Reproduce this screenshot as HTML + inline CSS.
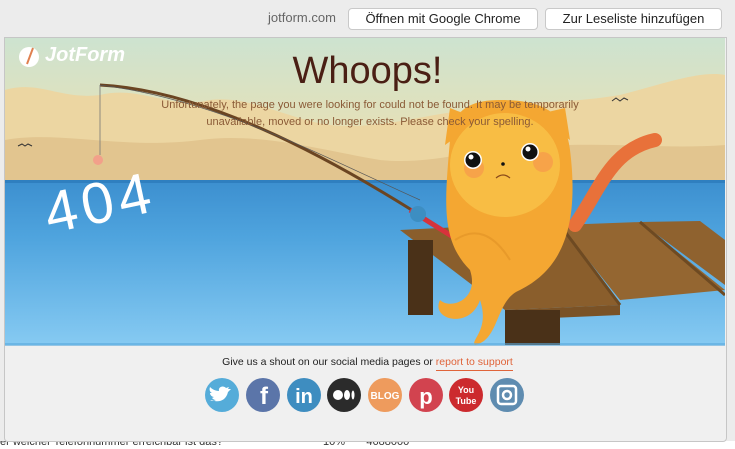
<!DOCTYPE html>
<html><head><meta charset="utf-8"><style>
body{margin:0;width:735px;height:449px;overflow:hidden;background:#ececec;font-family:"Liberation Sans",sans-serif;position:relative}
.btn{position:absolute;top:8px;height:20px;border:1px solid #c9c9c9;border-radius:4px;background:#fff;font-size:13px;line-height:20px;text-align:center;color:#222}
svg{position:absolute;left:0;top:0}
.t{position:absolute;text-align:center}
</style></head><body>
<div style="position:absolute;left:268px;top:10px;font-size:13px;color:#666">jotform.com</div>
<div class="btn" style="left:348px;width:188px">Öffnen mit Google Chrome</div>
<div class="btn" style="left:545px;width:175px">Zur Leseliste hinzufügen</div>
<div style="position:absolute;left:0;top:441px;width:735px;height:8px;background:#fff;font-size:11px;line-height:14px;color:#333;overflow:hidden"><span style="position:relative;top:-6px">er welcher Telefonnummer erreichbar ist das?</span><span style="position:relative;top:-6px;left:100px">10%&nbsp;&nbsp;&nbsp;&nbsp;&nbsp;&nbsp;&nbsp;4688000</span></div>
<div style="position:absolute;left:4px;top:37px;width:721px;height:403px;border:1px solid #c6c6c6;background:#f0f0f0;border-radius:0 0 4px 4px"></div>
<svg width="735" height="449" viewBox="0 0 735 449">
<defs>
<linearGradient id="sky" x1="0" y1="0" x2="0" y2="1"><stop offset="0" stop-color="#cde3d0"/><stop offset="1" stop-color="#f4dfa8"/></linearGradient>
<linearGradient id="sea" x1="0" y1="0" x2="0" y2="1"><stop offset="0" stop-color="#3c8fcf"/><stop offset="0.35" stop-color="#4fa4de"/><stop offset="1" stop-color="#86caf2"/></linearGradient>
<clipPath id="c"><rect x="5" y="38" width="720" height="307"/></clipPath>
</defs>
<g clip-path="url(#c)">
<rect x="5" y="38" width="720" height="150" fill="url(#sky)"/>
<path d="M5 90 C40 80 60 100 100 95 C140 85 170 110 210 100 C250 95 290 120 330 125 C380 130 420 115 470 110 C520 100 560 105 620 95 C660 85 700 70 725 75 L725 185 L5 185Z" fill="#ecd6a2"/>
<path d="M5 140 C60 130 120 150 200 140 C260 132 320 150 380 160 C430 165 470 150 520 148 C600 140 660 150 725 145 L725 185 L5 185Z" fill="#e2c58f"/>
<rect x="5" y="180" width="720" height="165" fill="url(#sea)"/>
<rect x="5" y="180" width="720" height="3" fill="#2f7fbf"/>
<path d="M18 146 l4 -2 l3 2 l3 -2 l4 2" stroke="#333" fill="none" stroke-width="1"/>
<path d="M612 101 l4 -3 l4 3 l4 -3 l4 2" stroke="#333" fill="none" stroke-width="1"/>
<polygon points="400,230 560,222 620,305 505,310" fill="#8a5e2c"/>
<polygon points="560,225 640,222 725,290 620,300" fill="#946631"/>
<polygon points="640,222 700,221 725,240 725,285" fill="#8f622f"/>
<path d="M560 225 L620 305 M640 222 L725 295" stroke="#6e4a22" stroke-width="3"/>
<polygon points="505,310 620,305 620,315 505,320" fill="#7a5226"/>
<rect x="408" y="240" width="25" height="75" fill="#4a3118"/>
<rect x="505" y="310" width="55" height="35" fill="#4a3118"/>
<path d="M100 85 C200 90 320 150 440 228" stroke="#6b4522" stroke-width="3" fill="none"/>
<path d="M100 85 C220 100 330 160 420 200" stroke="#555" stroke-width="0.7" fill="none"/>
<line x1="100" y1="85" x2="100" y2="155" stroke="#777" stroke-width="0.8"/>
<circle cx="98" cy="160" r="5" fill="#f2a08a"/>
<line x1="410" y1="210" x2="490" y2="260" stroke="#d6323c" stroke-width="5"/>
<circle cx="418" cy="214" r="8" fill="#3d8ec2"/>
<path d="M575 225 C600 190 610 150 655 140" stroke="#e8713a" stroke-width="14" fill="none" stroke-linecap="round"/>
<path d="M450 140 C445 200 440 240 470 270 C480 300 450 310 440 300 C430 320 470 330 480 300 C490 330 470 340 475 345 C500 340 495 300 520 290 C560 270 580 230 570 150 C565 110 540 100 500 100 C470 100 452 110 450 140Z" fill="#f4a732"/>
<polygon points="445,145 450,108 480,120" fill="#f4a732"/>
<polygon points="570,140 565,108 535,115" fill="#f4a732"/>
<ellipse cx="505" cy="165" rx="55" ry="52" fill="#f8bd44"/>
<circle cx="474" cy="168" r="10" fill="#f7a349"/>
<circle cx="543" cy="162" r="10" fill="#f7a349"/>
<circle cx="473" cy="160" r="9" fill="#fff"/><circle cx="473" cy="160" r="7.5" fill="#111"/><circle cx="471" cy="157" r="2.5" fill="#fff"/>
<circle cx="530" cy="152" r="9" fill="#fff"/><circle cx="530" cy="152" r="7.5" fill="#111"/><circle cx="528" cy="149" r="2.5" fill="#fff"/>
<circle cx="503" cy="164" r="1.8" fill="#111"/>
<path d="M496 178 q7 -6 14 0" stroke="#8a4a1a" fill="none" stroke-width="1.2"/>
<path d="M455 240 q30 -20 55 20" stroke="#e89a2a" fill="none" stroke-width="2"/>
<text x="104" y="222" font-family="Liberation Sans,sans-serif" font-size="58" fill="#fff" transform="rotate(-12 104 222)" text-anchor="middle" letter-spacing="5">404</text>
</g>
<rect x="5" y="343" width="720" height="3" fill="#5aa8dc" opacity=".6"/>
<circle cx="29" cy="57" r="10" fill="#fff"/>
<path d="M27 64 L33 48" stroke="#e08050" stroke-width="2"/>
<g font-family="Liberation Sans,sans-serif" font-weight="bold" text-anchor="middle" fill="#fff">
<circle cx="222" cy="395" r="17" fill="#55acd9"/><path d="M212 400 c6 3 14 1 16 -8 l3 -3 l-3 0 l1 -2 l-3 1 c-3 -3 -8 -1 -7 3 c-4 0 -7 -2 -9 -4 c-1 3 0 5 2 6 l-2 0 c0 2 2 4 4 4 l-2 1 c1 1 2 2 4 2 c-2 1 -4 1 -6 0z" fill="#fff"/>
<circle cx="263" cy="395" r="17" fill="#5b75a9"/><text x="264" y="404" font-size="24">f</text>
<circle cx="304" cy="395" r="17" fill="#3e8dc0"/><text x="304" y="403" font-size="20">in</text>
<circle cx="344" cy="395" r="17" fill="#2b2b2b"/><circle cx="338" cy="395" r="5"/><ellipse cx="347" cy="395" rx="3" ry="5"/><ellipse cx="353" cy="395" rx="1.5" ry="4.5"/>
<circle cx="385" cy="395" r="17" fill="#ee9b5d"/><text x="385" y="399" font-size="10">BLOG</text>
<circle cx="426" cy="395" r="17" fill="#d2434f"/><text x="426" y="404" font-size="22">p</text>
<circle cx="466" cy="395" r="17" fill="#cc2a2e"/><text x="466" y="393" font-size="9">You</text><text x="466" y="404" font-size="9">Tube</text>
<circle cx="507" cy="395" r="17" fill="#5f8cb0"/><rect x="498" y="386" width="18" height="18" rx="3" fill="none" stroke="#fff" stroke-width="2.5"/><circle cx="507" cy="395" r="4" fill="none" stroke="#fff" stroke-width="2.5"/>
</g>
</svg>
<div class="t" style="left:45px;top:44px;font-size:20px;font-style:italic;color:#fff;font-weight:bold">JotForm</div>
<div class="t" style="left:0;width:735px;top:50px;font-size:38px;color:#4a1f14">Whoops!</div>
<div class="t" style="left:150px;width:440px;top:97px;font-size:11px;line-height:17px;color:#8a5a36">Unfortunately, the page you were looking for could not be found. It may be temporarily<br>unavailable, moved or no longer exists. Please check your spelling.</div>
<div class="t" style="left:0;width:735px;top:356px;font-size:10.5px;color:#222">Give us a shout on our social media pages or <span style="color:#e0643a;border-bottom:1px solid #e0643a;padding-bottom:2px">report to support</span></div>
</body></html>
